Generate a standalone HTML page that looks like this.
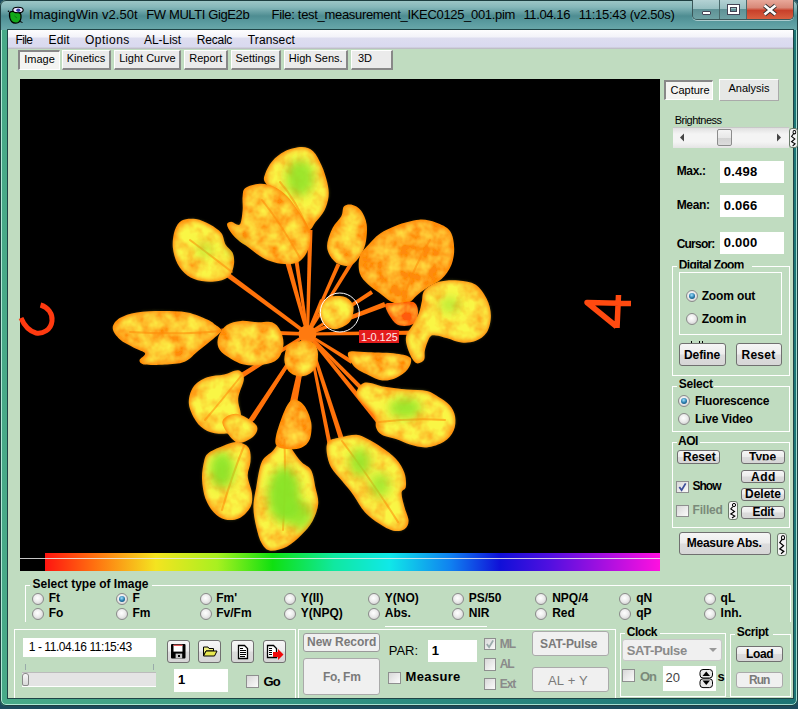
<!DOCTYPE html><html><head><meta charset="utf-8"><style>
*{margin:0;padding:0;box-sizing:border-box}
html,body{width:798px;height:709px;overflow:hidden;background:#2a6a70}
body{position:relative;font-family:"Liberation Sans",sans-serif;font-size:11px;color:#000}
.a{position:absolute}
.t{position:absolute;white-space:nowrap;line-height:1}
.btn{position:absolute;background:linear-gradient(180deg,#f6f6f6 0,#ececec 48%,#dcdcdc 52%,#d6d6d6 100%);border:1px solid #707070;border-radius:3px}
.tab{position:absolute;background:#ebebeb;border-top:1px solid #fff;border-left:1px solid #fff;border-right:2px solid #888;border-bottom:2px solid #888}
.tabd{position:absolute;background:#f4f4f2;border-top:2px solid #888;border-left:2px solid #888;border-right:1px solid #fff;border-bottom:1px solid #fff}
.grp{position:absolute;border:1px solid #fff}
.edit{position:absolute;background:#fff}
.radio{position:absolute;width:12px;height:12px;border-radius:50%;border:1px solid #8a8a8a;background:radial-gradient(circle at 45% 40%,#fff 0,#ececec 45%,#c4c4c4 100%)}
.radio.on::after{content:"";position:absolute;left:2px;top:2px;width:6px;height:6px;border-radius:50%;background:radial-gradient(circle at 45% 35%,#9ee0ff 0,#2478a8 55%,#0a3a60 100%)}
.chk{position:absolute;border:1px solid #8e8f8f;background:linear-gradient(135deg,#d8d8d8,#fbfbfb)}
</style></head><body><div class="a" style="left:0px;top:0px;width:798px;height:709px;background:#1c4a5c"></div>
<div class="a" style="left:0px;top:0px;width:798px;height:706px;background:linear-gradient(90deg,#48aa88 0%,#3e9e84 25%,#2c8c80 50%,#227c7a 80%,#1c7474 100%);border-radius:6px 6px 6px 6px"></div>
<div class="a" style="left:1px;top:1px;width:796px;height:704px;border:1px solid rgba(210,255,240,.75);border-radius:5px"></div>
<div class="a" style="left:0px;top:0px;width:798px;height:30px;background:linear-gradient(180deg,#a0c8c8 0,#86b8ba 7px,#4e8d92 16px,#5b9ca0 23px,#6aa8aa 30px);border-radius:6px 6px 0 0"></div>
<div class="a" style="left:0px;top:0px;width:798px;height:706px;border:1px solid #1e3e40;border-radius:6px"></div>
<div class="a" style="left:7px;top:29px;width:787px;height:670px;background:#c0dcc0;border:1px solid #1f4446"></div>
<div class="a" style="left:8px;top:30px;width:785px;height:19px;background:linear-gradient(180deg,#fdfdfe 0,#f3f3f9 7px,#dedef0 8px,#d9d9ef 17px,#c4c4cc 18px,#b8b8c0 19px)"></div>
<div class="t" style="left:15.50px;top:34.24px;font-size:12px;letter-spacing:-0.667px;">File</div>
<div class="t" style="left:48.60px;top:34.24px;font-size:12px;letter-spacing:0.133px;">Edit</div>
<div class="t" style="left:85.00px;top:34.24px;font-size:12px;letter-spacing:0.500px;">Options</div>
<div class="t" style="left:144.00px;top:34.24px;font-size:12px;letter-spacing:-0.050px;">AL-List</div>
<div class="t" style="left:196.70px;top:34.24px;font-size:12px;letter-spacing:-0.200px;">Recalc</div>
<div class="t" style="left:247.80px;top:34.24px;font-size:12px;letter-spacing:0.114px;">Transect</div>
<div class="t" style="left:29.00px;top:8.00px;font-size:13px;letter-spacing:0.062px;">ImagingWin v2.50t</div>
<div class="t" style="left:146.30px;top:8.00px;font-size:13px;letter-spacing:-0.393px;">FW MULTI GigE2b</div>
<div class="t" style="left:271.60px;top:8.00px;font-size:13px;letter-spacing:-0.316px;">File: test_measurement_IKEC0125_001.pim</div>
<div class="t" style="left:523.40px;top:8.00px;font-size:13px;letter-spacing:-0.371px;">11.04.16</div>
<div class="t" style="left:578.70px;top:8.00px;font-size:13px;letter-spacing:-0.250px;">11:15:43 (v2.50s)</div>
<div class="tabd" style="left:18px;top:50px;width:42px;height:20px;"></div>
<div class="t" style="left:24.25px;top:54.19px;font-size:11px;">Image</div>
<div class="tab" style="left:62px;top:50px;width:49px;height:20px;"></div>
<div class="t" style="left:66.75px;top:53.19px;font-size:11px;">Kinetics</div>
<div class="tab" style="left:114px;top:50px;width:67px;height:20px;"></div>
<div class="t" style="left:119.25px;top:53.19px;font-size:11px;">Light Curve</div>
<div class="tab" style="left:184px;top:50px;width:44px;height:20px;"></div>
<div class="t" style="left:189.25px;top:53.19px;font-size:11px;">Report</div>
<div class="tab" style="left:231px;top:50px;width:50px;height:20px;"></div>
<div class="t" style="left:235.50px;top:53.19px;font-size:11px;">Settings</div>
<div class="tab" style="left:284px;top:50px;width:64px;height:20px;"></div>
<div class="t" style="left:288.75px;top:53.19px;font-size:11px;">High Sens.</div>
<div class="tab" style="left:351px;top:50px;width:42px;height:20px;"></div>
<div class="t" style="left:358.00px;top:53.19px;font-size:11px;">3D</div>
<div class="a" style="left:20px;top:79px;width:640px;height:492px;background:#000"></div>
<div class="a" style="left:45px;top:553px;width:615px;height:18px;background:linear-gradient(90deg,#ff1410 0%,#ff7010 8%,#f4e420 18%,#a8f020 28%,#10e010 37%,#10e8a0 47%,#10e8e8 56%,#1080f0 66%,#1010d8 74%,#5010e0 82%,#ff10e0 100%)"></div>
<div class="a" style="left:20px;top:558px;width:640px;height:1px;background:#e8e8e8;opacity:.85"></div>
<svg class="a" style="left:0;top:0" width="798" height="709" viewBox="0 0 798 709">
<defs>
<filter id="fy" x="-10%" y="-10%" width="120%" height="120%">
 <feMorphology in="SourceAlpha" operator="erode" radius="2" result="e"/>
 <feGaussianBlur in="e" stdDeviation="2.2" result="b"/>
 <feTurbulence type="fractalNoise" baseFrequency="0.07" numOctaves="3" seed="4" result="n"/>
 <feColorMatrix in="n" type="matrix" values="0 0 0 0 0.95  0 0 0 0 0.92  0 0 0 0 0.06  0 0 0 -1.6 1.6" result="y"/>
 <feComposite in="y" in2="b" operator="in" result="yi"/>
 <feMerge><feMergeNode in="SourceGraphic"/><feMergeNode in="yi"/></feMerge>
</filter>
<filter id="fyo" x="-10%" y="-10%" width="120%" height="120%">
 <feMorphology in="SourceAlpha" operator="erode" radius="2" result="e"/>
 <feGaussianBlur in="e" stdDeviation="2.2" result="b"/>
 <feTurbulence type="fractalNoise" baseFrequency="0.07" numOctaves="3" seed="5" result="n"/>
 <feColorMatrix in="n" type="matrix" values="0 0 0 0 0.97  0 0 0 0 0.88  0 0 0 0 0.06  0 0 0 -1.6 1.3" result="y"/>
 <feComposite in="y" in2="b" operator="in" result="yi"/>
 <feMerge><feMergeNode in="SourceGraphic"/><feMergeNode in="yi"/></feMerge>
</filter>
<filter id="fo" x="-10%" y="-10%" width="120%" height="120%">
 <feMorphology in="SourceAlpha" operator="erode" radius="2" result="e"/>
 <feGaussianBlur in="e" stdDeviation="2.2" result="b"/>
 <feTurbulence type="fractalNoise" baseFrequency="0.07" numOctaves="3" seed="7" result="n"/>
 <feColorMatrix in="n" type="matrix" values="0 0 0 0 1.0  0 0 0 0 0.8  0 0 0 0 0.06  0 0 0 -1.6 1.1" result="y"/>
 <feComposite in="y" in2="b" operator="in" result="yi"/>
 <feMerge><feMergeNode in="SourceGraphic"/><feMergeNode in="yi"/></feMerge>
</filter>
<filter id="gb"><feGaussianBlur stdDeviation="5"/></filter>
<clipPath id="cp">
<path d="M265.1 173.9 C266.3 170.4 268.9 165.0 272.2 161.2 C275.5 157.4 280.0 153.7 284.9 151.3 C289.8 149.0 297.1 147.1 301.8 147.1 C306.5 147.1 309.8 148.2 313.1 151.3 C316.4 154.4 319.2 160.2 321.6 165.4 C324.0 170.6 326.0 177.1 327.2 182.3 C328.4 187.5 329.1 191.7 328.6 196.4 C328.1 201.1 326.5 206.3 324.4 210.5 C322.3 214.7 318.7 218.5 315.9 221.8 C313.1 225.1 311.2 232.2 307.4 230.3 C303.6 228.4 298.5 216.6 293.3 210.5 C288.1 204.4 281.1 198.3 276.4 193.6 C271.7 188.9 267.0 185.6 265.1 182.3 C263.2 179.0 263.9 177.4 265.1 173.9Z"/>
<path d="M245.4 188.0 C248.2 185.9 254.8 183.9 259.5 183.7 C264.2 183.4 269.0 184.4 273.6 186.5 C278.2 188.6 282.8 191.8 287.0 196.0 C291.2 200.2 295.3 206.5 299.0 212.0 C302.7 217.5 307.3 223.2 309.0 229.0 C310.7 234.8 310.5 241.7 309.0 247.0 C307.5 252.3 304.0 258.1 300.0 261.0 C296.0 263.9 289.8 264.1 284.9 264.1 C280.0 264.2 275.0 262.7 270.8 261.3 C266.6 259.9 263.3 258.1 259.5 255.7 C255.7 253.3 251.5 249.5 248.2 247.2 C244.9 244.8 242.5 243.9 239.7 241.6 C236.9 239.2 233.4 235.9 231.3 233.1 C229.2 230.3 227.0 226.5 227.0 224.6 C227.0 222.7 229.2 221.8 231.3 221.8 C233.4 221.8 237.8 226.5 239.7 224.6 C241.6 222.7 242.1 215.2 242.6 210.5 C243.1 205.8 242.1 200.2 242.6 196.4 C243.1 192.7 242.6 190.1 245.4 188.0Z"/>
<path d="M181.8 220.4 C185.3 218.5 191.2 218.3 195.9 219.0 C200.6 219.7 205.8 222.2 210.0 224.6 C214.2 226.9 218.7 229.8 221.3 233.1 C223.9 236.4 223.6 241.1 225.5 244.4 C227.4 247.7 231.2 249.5 232.6 252.8 C234.0 256.1 234.5 260.3 234.0 264.1 C233.5 267.9 232.4 272.6 229.8 275.4 C227.2 278.2 223.2 280.1 218.5 281.0 C213.8 281.9 206.8 281.9 201.6 281.0 C196.4 280.1 191.4 278.2 187.4 275.4 C183.4 272.6 180.0 268.8 177.6 264.1 C175.2 259.4 173.3 252.8 172.8 247.2 C172.3 241.6 173.3 234.8 174.8 230.3 C176.3 225.8 178.3 222.3 181.8 220.4Z"/>
<path d="M112.7 328.0 C112.7 324.5 115.7 320.7 119.7 318.1 C123.7 315.5 129.6 313.6 136.7 312.4 C143.8 311.2 153.6 311.0 162.1 311.0 C170.6 311.0 179.9 311.0 187.4 312.4 C194.9 313.8 202.5 317.4 207.2 319.5 C211.9 321.6 213.3 323.2 215.7 325.1 C218.0 327.0 221.8 328.5 221.3 330.8 C220.8 333.1 216.6 335.9 212.8 339.2 C209.0 342.5 203.4 346.7 198.7 350.5 C194.0 354.3 190.2 359.4 184.6 361.8 C179.0 364.2 171.5 364.1 164.9 364.6 C158.3 365.1 149.3 365.3 145.1 364.6 C140.9 363.9 139.5 362.3 139.5 360.4 C139.5 358.5 146.0 355.4 145.1 353.3 C144.2 351.2 138.1 350.1 133.9 347.7 C129.7 345.3 123.2 342.5 119.7 339.2 C116.2 335.9 112.7 331.5 112.7 328.0Z"/>
<path d="M218.5 336.4 C219.9 332.6 223.2 327.7 226.9 325.1 C230.7 322.5 235.8 321.4 241.0 320.9 C246.2 320.4 252.8 322.1 258.0 322.3 C263.2 322.5 268.4 320.9 272.1 322.3 C275.9 323.7 278.6 327.0 280.5 330.8 C282.4 334.6 283.9 340.2 283.4 344.9 C282.9 349.6 281.0 355.7 277.7 359.0 C274.4 362.3 269.2 363.7 263.6 364.6 C258.0 365.5 250.0 366.0 243.9 364.6 C237.8 363.2 231.1 359.0 226.9 356.2 C222.7 353.4 219.9 351.0 218.5 347.7 C217.1 344.4 217.1 340.2 218.5 336.4Z"/>
<path d="M193.1 387.2 C196.1 382.7 202.0 379.4 207.2 377.3 C212.4 375.2 218.9 375.7 224.1 374.5 C229.3 373.3 234.9 369.6 238.2 370.3 C241.5 371.0 243.9 374.0 243.9 378.7 C243.9 383.4 238.7 392.4 238.2 398.5 C237.7 404.6 241.0 410.2 241.0 415.4 C241.0 420.6 241.0 426.4 238.2 429.5 C235.4 432.6 229.3 433.5 224.1 433.7 C218.9 433.9 211.9 433.0 207.2 430.9 C202.5 428.8 198.9 425.5 195.9 421.0 C192.9 416.5 189.4 409.7 188.9 404.1 C188.4 398.5 190.1 391.7 193.1 387.2Z"/>
<path d="M222.3 422.3 C222.3 417.6 230.8 413.3 236.4 413.8 C242.1 414.3 253.4 421.3 256.2 425.1 C259.0 428.9 256.7 433.6 253.4 436.4 C250.1 439.2 241.6 444.5 236.4 442.1 C231.2 439.8 222.3 427.0 222.3 422.3Z"/>
<path d="M208.2 453.3 C211.2 450.7 217.6 448.2 222.3 446.3 C227.0 444.4 232.0 441.9 236.4 442.1 C240.8 442.3 246.3 444.4 248.7 447.7 C251.0 451.0 250.7 457.1 250.5 461.8 C250.3 466.5 247.5 470.7 247.7 475.9 C247.9 481.1 251.4 487.6 251.9 492.8 C252.4 498.0 252.6 502.7 250.5 506.9 C248.4 511.1 243.4 516.1 239.2 518.2 C235.0 520.3 229.3 520.5 225.1 519.6 C220.9 518.7 217.2 516.1 213.9 512.6 C210.6 509.1 207.4 504.1 205.4 498.5 C203.4 492.9 202.2 484.8 202.0 478.7 C201.8 472.6 203.0 466.0 204.0 461.8 C205.0 457.6 205.1 455.9 208.2 453.3Z"/>
<path d="M261.8 461.8 C264.6 455.7 269.3 454.7 273.1 450.5 C276.9 446.3 281.1 436.4 284.4 436.4 C287.7 436.4 290.0 446.3 292.8 450.5 C295.6 454.7 298.2 458.5 301.3 461.8 C304.4 465.1 308.9 466.1 311.2 470.3 C313.5 474.5 314.2 481.6 315.4 487.2 C316.6 492.8 318.7 498.5 318.2 504.1 C317.7 509.7 315.4 515.8 312.6 521.0 C309.8 526.2 305.5 530.9 301.3 535.1 C297.1 539.3 292.4 543.8 287.2 546.4 C282.0 549.0 274.5 551.2 270.3 550.7 C266.1 550.2 264.2 547.6 261.8 543.6 C259.4 539.6 257.6 532.8 256.2 526.7 C254.8 520.6 253.4 513.5 253.4 506.9 C253.4 500.3 254.8 494.7 256.2 487.2 C257.6 479.7 259.0 467.9 261.8 461.8Z"/>
<path d="M275.9 436.4 C277.1 430.5 281.6 417.1 284.4 411.0 C287.2 404.9 289.5 400.6 292.8 399.7 C296.1 398.8 301.0 401.6 304.1 405.4 C307.2 409.2 310.2 416.7 311.2 422.3 C312.1 427.9 311.4 435.0 309.8 439.2 C308.2 443.4 305.1 446.0 301.3 447.7 C297.5 449.4 291.2 449.3 287.2 449.1 C283.2 448.9 279.2 448.4 277.3 446.3 C275.4 444.2 274.7 442.3 275.9 436.4Z"/>
<path d="M327.2 244.4 C327.7 239.7 330.4 232.1 332.8 227.4 C335.2 222.7 339.4 219.7 341.3 216.2 C343.2 212.7 342.2 208.2 344.1 206.3 C346.0 204.4 349.8 204.2 352.6 204.9 C355.4 205.6 358.6 207.2 361.0 210.5 C363.4 213.8 366.0 218.9 366.7 224.6 C367.4 230.2 366.7 238.8 365.3 244.4 C363.9 250.1 360.8 255.0 358.2 258.5 C355.6 262.0 353.1 264.6 349.8 265.5 C346.5 266.4 341.8 265.7 338.5 264.1 C335.2 262.5 331.9 259.0 330.0 255.7 C328.1 252.4 326.7 249.1 327.2 244.4Z"/>
<path d="M321.1 303.7 C322.8 301.2 325.6 298.0 329.5 296.9 C333.4 295.8 340.9 295.5 344.8 296.9 C348.8 298.3 352.1 301.7 353.2 305.4 C354.3 309.1 352.9 315.5 351.5 318.9 C350.1 322.3 347.9 324.0 344.8 325.7 C341.7 327.4 336.6 329.7 332.9 329.1 C329.2 328.5 325.1 325.1 322.8 322.3 C320.6 319.5 319.7 315.2 319.4 312.1 C319.1 309.0 319.4 306.2 321.1 303.7Z"/>
<path d="M288.9 344.3 C291.4 342.6 296.9 341.2 300.8 340.9 C304.8 340.6 309.8 340.9 312.6 342.6 C315.4 344.3 317.0 347.4 317.7 351.1 C318.4 354.8 317.9 360.9 316.8 364.6 C315.7 368.3 313.6 371.1 310.9 373.1 C308.2 375.1 304.2 376.4 300.8 376.4 C297.4 376.4 293.3 375.4 290.6 373.1 C287.9 370.9 285.6 366.6 284.7 362.9 C283.8 359.2 284.8 354.2 285.5 351.1 C286.2 348.0 286.3 346.0 288.9 344.3Z"/>
<path d="M368.2 245.1 C371.5 241.3 374.8 237.2 379.5 233.9 C384.2 230.6 389.8 227.8 396.4 225.4 C403.0 223.0 412.4 220.2 419.0 219.7 C425.6 219.2 430.7 220.7 435.9 222.6 C441.1 224.5 446.9 226.8 450.0 231.0 C453.1 235.2 454.0 242.3 454.2 248.0 C454.4 253.7 453.5 259.7 451.4 264.9 C449.3 270.1 445.6 275.2 441.6 279.0 C437.6 282.8 431.6 284.7 427.4 287.5 C423.2 290.3 419.0 293.5 416.2 295.9 C413.4 298.2 412.9 300.2 410.5 301.6 C408.1 303.0 405.3 304.4 402.0 304.4 C398.7 304.4 394.6 303.5 390.8 301.6 C387.1 299.7 383.3 295.9 379.5 293.1 C375.7 290.3 371.5 287.9 368.2 284.6 C364.9 281.3 361.1 278.0 359.7 273.3 C358.3 268.6 358.3 261.1 359.7 256.4 C361.1 251.7 364.9 248.8 368.2 245.1Z"/>
<path d="M385.0 305.0 C385.0 301.5 391.7 303.5 396.4 303.0 C401.1 302.5 409.7 300.5 413.3 302.0 C416.9 303.5 418.0 308.3 418.0 312.0 C418.0 315.7 416.9 322.1 413.3 324.1 C409.7 326.1 401.1 327.3 396.4 324.1 C391.7 320.9 385.0 308.5 385.0 305.0Z"/>
<path d="M424.6 290.3 C427.4 287.0 433.1 283.5 438.7 281.8 C444.3 280.1 452.4 279.9 458.5 280.4 C464.6 280.9 470.7 281.6 475.4 284.6 C480.1 287.7 484.1 293.5 486.7 298.7 C489.3 303.9 490.9 310.0 490.9 315.7 C490.9 321.4 489.3 328.4 486.7 332.6 C484.1 336.8 479.6 339.4 475.4 341.0 C471.2 342.6 466.0 343.0 461.3 342.5 C456.6 342.0 451.4 339.4 447.2 338.2 C443.0 337.0 438.8 335.6 435.9 335.4 C433.0 335.2 431.8 334.6 430.0 337.0 C428.2 339.4 426.0 346.2 425.0 350.0 C424.0 353.8 425.5 357.8 424.0 360.0 C422.5 362.2 418.5 364.3 416.0 363.0 C413.5 361.7 410.7 356.3 409.0 352.0 C407.3 347.7 405.3 341.6 406.0 337.0 C406.7 332.4 411.1 328.1 413.3 324.1 C415.5 320.1 417.6 316.6 419.0 312.8 C420.4 309.1 420.9 305.4 421.8 301.6 C422.7 297.9 421.8 293.6 424.6 290.3Z"/>
<path d="M348.5 352.3 C350.9 350.0 360.2 352.1 368.2 352.3 C376.2 352.5 389.3 352.8 396.4 353.7 C403.4 354.6 408.6 355.4 410.5 358.0 C412.4 360.6 410.1 366.0 407.7 369.3 C405.3 372.6 400.6 375.8 396.4 377.7 C392.2 379.6 387.0 381.0 382.3 380.5 C377.6 380.0 372.9 377.2 368.2 374.9 C363.5 372.5 357.4 370.2 354.1 366.4 C350.8 362.6 346.1 354.6 348.5 352.3Z"/>
<path d="M364.9 382.6 C369.6 381.4 377.6 385.6 384.6 386.8 C391.7 388.0 400.1 388.9 407.2 389.6 C414.2 390.3 421.7 389.8 426.9 391.0 C432.1 392.2 434.4 394.3 438.2 396.7 C442.0 399.1 446.7 401.8 449.5 405.1 C452.3 408.4 454.4 412.2 455.1 416.4 C455.8 420.6 455.6 426.3 453.7 430.5 C451.8 434.7 448.4 439.0 443.9 441.8 C439.4 444.6 432.5 446.9 426.9 447.4 C421.2 447.9 415.2 446.0 410.0 444.6 C404.8 443.2 400.6 440.6 395.9 439.0 C391.2 437.4 385.1 436.7 381.8 434.8 C378.5 432.9 377.4 430.8 376.2 427.7 C375.0 424.6 376.7 420.2 374.8 416.4 C372.9 412.6 368.0 408.9 364.9 405.1 C361.8 401.4 356.4 397.6 356.4 393.9 C356.4 390.1 360.2 383.8 364.9 382.6Z"/>
<path d="M328.2 441.8 C330.3 439.2 334.8 438.8 339.5 437.6 C344.2 436.4 351.7 434.6 356.4 434.8 C361.1 435.0 363.5 436.9 367.7 439.0 C371.9 441.1 377.1 444.1 381.8 447.4 C386.5 450.7 392.1 454.5 395.9 458.7 C399.7 462.9 402.8 468.1 404.4 472.8 C406.0 477.5 406.3 483.6 405.8 486.9 C405.3 490.2 401.8 489.3 401.6 492.6 C401.4 495.9 403.2 502.0 404.4 506.7 C405.6 511.4 408.6 517.0 408.6 520.8 C408.6 524.5 407.0 527.6 404.4 529.2 C401.8 530.9 397.3 531.6 393.1 530.7 C388.9 529.8 383.7 526.7 379.0 523.6 C374.3 520.5 369.1 517.0 364.9 512.3 C360.7 507.6 357.4 500.6 353.6 495.4 C349.8 490.2 346.1 486.0 342.3 481.3 C338.5 476.6 333.6 471.9 331.0 467.2 C328.4 462.5 327.3 457.3 326.8 453.1 C326.3 448.9 326.1 444.4 328.2 441.8Z"/>
</clipPath></defs>
<g>
<path d="M308.5 332.6 L230.0 273.4 L227.0 277.4 L306.5 335.4Z" fill="#ff720a"/>
<path d="M308.9 333.6 L290.1 261.3 L285.3 262.7 L306.1 334.4Z" fill="#ff720a"/>
<path d="M308.7 333.8 L298.0 257.7 L294.0 258.3 L306.3 334.2Z" fill="#ff720a"/>
<path d="M309.0 334.0 L312.5 230.1 L308.1 229.9 L306.0 334.0Z" fill="#ff720a"/>
<path d="M308.6 334.5 L340.3 264.9 L336.7 263.3 L306.4 333.5Z" fill="#ff720a"/>
<path d="M308.6 334.7 L353.7 263.1 L350.3 260.9 L306.4 333.3Z" fill="#ff720a"/>
<path d="M308.2 335.0 L373.1 293.7 L370.9 290.3 L306.8 333.0Z" fill="#ff720a"/>
<path d="M308.0 335.4 L385.9 306.7 L384.1 302.1 L307.0 332.6Z" fill="#ff720a"/>
<path d="M307.5 335.5 L416.2 334.8 L416.2 330.4 L307.5 332.5Z" fill="#ff720a"/>
<path d="M307.6 332.3 L221.4 328.5 L221.2 333.5 L307.4 335.7Z" fill="#ff720a"/>
<path d="M306.7 332.7 L239.7 373.8 L242.3 378.0 L308.3 335.3Z" fill="#ff720a"/>
<path d="M306.2 333.2 L234.3 440.7 L238.5 443.5 L308.8 334.8Z" fill="#ff720a"/>
<path d="M306.4 333.3 L250.3 418.9 L253.7 421.1 L308.6 334.7Z" fill="#ff720a"/>
<path d="M306.0 333.7 L282.0 435.8 L286.8 437.0 L309.0 334.3Z" fill="#ff720a"/>
<path d="M306.0 333.7 L292.8 401.6 L297.2 402.4 L309.0 334.3Z" fill="#ff720a"/>
<path d="M306.1 334.5 L339.9 442.6 L344.7 441.0 L308.9 333.5Z" fill="#ff720a"/>
<path d="M306.3 334.2 L328.0 446.4 L332.0 445.6 L308.7 333.8Z" fill="#ff720a"/>
<path d="M306.3 334.9 L377.1 423.7 L380.9 420.5 L308.7 333.1Z" fill="#ff720a"/>
<path d="M306.6 334.9 L366.4 396.6 L369.6 393.4 L308.4 333.1Z" fill="#ff720a"/>
<path d="M306.8 335.1 L350.9 363.7 L353.1 360.3 L308.2 332.9Z" fill="#ff720a"/>
<path d="M308.9 334.6 L323.8 300.8 L320.2 299.2 L306.1 333.4Z" fill="#ff720a"/>
<circle cx="307.5" cy="334" r="9" fill="#ff7a10"/>
<path d="M265.1 173.9 C266.3 170.4 268.9 165.0 272.2 161.2 C275.5 157.4 280.0 153.7 284.9 151.3 C289.8 149.0 297.1 147.1 301.8 147.1 C306.5 147.1 309.8 148.2 313.1 151.3 C316.4 154.4 319.2 160.2 321.6 165.4 C324.0 170.6 326.0 177.1 327.2 182.3 C328.4 187.5 329.1 191.7 328.6 196.4 C328.1 201.1 326.5 206.3 324.4 210.5 C322.3 214.7 318.7 218.5 315.9 221.8 C313.1 225.1 311.2 232.2 307.4 230.3 C303.6 228.4 298.5 216.6 293.3 210.5 C288.1 204.4 281.1 198.3 276.4 193.6 C271.7 188.9 267.0 185.6 265.1 182.3 C263.2 179.0 263.9 177.4 265.1 173.9Z" fill="#ff8a0a" filter="url(#fy)"/>
<path d="M245.4 188.0 C248.2 185.9 254.8 183.9 259.5 183.7 C264.2 183.4 269.0 184.4 273.6 186.5 C278.2 188.6 282.8 191.8 287.0 196.0 C291.2 200.2 295.3 206.5 299.0 212.0 C302.7 217.5 307.3 223.2 309.0 229.0 C310.7 234.8 310.5 241.7 309.0 247.0 C307.5 252.3 304.0 258.1 300.0 261.0 C296.0 263.9 289.8 264.1 284.9 264.1 C280.0 264.2 275.0 262.7 270.8 261.3 C266.6 259.9 263.3 258.1 259.5 255.7 C255.7 253.3 251.5 249.5 248.2 247.2 C244.9 244.8 242.5 243.9 239.7 241.6 C236.9 239.2 233.4 235.9 231.3 233.1 C229.2 230.3 227.0 226.5 227.0 224.6 C227.0 222.7 229.2 221.8 231.3 221.8 C233.4 221.8 237.8 226.5 239.7 224.6 C241.6 222.7 242.1 215.2 242.6 210.5 C243.1 205.8 242.1 200.2 242.6 196.4 C243.1 192.7 242.6 190.1 245.4 188.0Z" fill="#ff8a0a" filter="url(#fyo)"/>
<path d="M181.8 220.4 C185.3 218.5 191.2 218.3 195.9 219.0 C200.6 219.7 205.8 222.2 210.0 224.6 C214.2 226.9 218.7 229.8 221.3 233.1 C223.9 236.4 223.6 241.1 225.5 244.4 C227.4 247.7 231.2 249.5 232.6 252.8 C234.0 256.1 234.5 260.3 234.0 264.1 C233.5 267.9 232.4 272.6 229.8 275.4 C227.2 278.2 223.2 280.1 218.5 281.0 C213.8 281.9 206.8 281.9 201.6 281.0 C196.4 280.1 191.4 278.2 187.4 275.4 C183.4 272.6 180.0 268.8 177.6 264.1 C175.2 259.4 173.3 252.8 172.8 247.2 C172.3 241.6 173.3 234.8 174.8 230.3 C176.3 225.8 178.3 222.3 181.8 220.4Z" fill="#ff8a0a" filter="url(#fy)"/>
<path d="M112.7 328.0 C112.7 324.5 115.7 320.7 119.7 318.1 C123.7 315.5 129.6 313.6 136.7 312.4 C143.8 311.2 153.6 311.0 162.1 311.0 C170.6 311.0 179.9 311.0 187.4 312.4 C194.9 313.8 202.5 317.4 207.2 319.5 C211.9 321.6 213.3 323.2 215.7 325.1 C218.0 327.0 221.8 328.5 221.3 330.8 C220.8 333.1 216.6 335.9 212.8 339.2 C209.0 342.5 203.4 346.7 198.7 350.5 C194.0 354.3 190.2 359.4 184.6 361.8 C179.0 364.2 171.5 364.1 164.9 364.6 C158.3 365.1 149.3 365.3 145.1 364.6 C140.9 363.9 139.5 362.3 139.5 360.4 C139.5 358.5 146.0 355.4 145.1 353.3 C144.2 351.2 138.1 350.1 133.9 347.7 C129.7 345.3 123.2 342.5 119.7 339.2 C116.2 335.9 112.7 331.5 112.7 328.0Z" fill="#ff8a0a" filter="url(#fyo)"/>
<path d="M218.5 336.4 C219.9 332.6 223.2 327.7 226.9 325.1 C230.7 322.5 235.8 321.4 241.0 320.9 C246.2 320.4 252.8 322.1 258.0 322.3 C263.2 322.5 268.4 320.9 272.1 322.3 C275.9 323.7 278.6 327.0 280.5 330.8 C282.4 334.6 283.9 340.2 283.4 344.9 C282.9 349.6 281.0 355.7 277.7 359.0 C274.4 362.3 269.2 363.7 263.6 364.6 C258.0 365.5 250.0 366.0 243.9 364.6 C237.8 363.2 231.1 359.0 226.9 356.2 C222.7 353.4 219.9 351.0 218.5 347.7 C217.1 344.4 217.1 340.2 218.5 336.4Z" fill="#ff8a0a" filter="url(#fyo)"/>
<path d="M193.1 387.2 C196.1 382.7 202.0 379.4 207.2 377.3 C212.4 375.2 218.9 375.7 224.1 374.5 C229.3 373.3 234.9 369.6 238.2 370.3 C241.5 371.0 243.9 374.0 243.9 378.7 C243.9 383.4 238.7 392.4 238.2 398.5 C237.7 404.6 241.0 410.2 241.0 415.4 C241.0 420.6 241.0 426.4 238.2 429.5 C235.4 432.6 229.3 433.5 224.1 433.7 C218.9 433.9 211.9 433.0 207.2 430.9 C202.5 428.8 198.9 425.5 195.9 421.0 C192.9 416.5 189.4 409.7 188.9 404.1 C188.4 398.5 190.1 391.7 193.1 387.2Z" fill="#ff8a0a" filter="url(#fy)"/>
<path d="M222.3 422.3 C222.3 417.6 230.8 413.3 236.4 413.8 C242.1 414.3 253.4 421.3 256.2 425.1 C259.0 428.9 256.7 433.6 253.4 436.4 C250.1 439.2 241.6 444.5 236.4 442.1 C231.2 439.8 222.3 427.0 222.3 422.3Z" fill="#ff8a0a" filter="url(#fy)"/>
<path d="M208.2 453.3 C211.2 450.7 217.6 448.2 222.3 446.3 C227.0 444.4 232.0 441.9 236.4 442.1 C240.8 442.3 246.3 444.4 248.7 447.7 C251.0 451.0 250.7 457.1 250.5 461.8 C250.3 466.5 247.5 470.7 247.7 475.9 C247.9 481.1 251.4 487.6 251.9 492.8 C252.4 498.0 252.6 502.7 250.5 506.9 C248.4 511.1 243.4 516.1 239.2 518.2 C235.0 520.3 229.3 520.5 225.1 519.6 C220.9 518.7 217.2 516.1 213.9 512.6 C210.6 509.1 207.4 504.1 205.4 498.5 C203.4 492.9 202.2 484.8 202.0 478.7 C201.8 472.6 203.0 466.0 204.0 461.8 C205.0 457.6 205.1 455.9 208.2 453.3Z" fill="#ff8a0a" filter="url(#fy)"/>
<path d="M261.8 461.8 C264.6 455.7 269.3 454.7 273.1 450.5 C276.9 446.3 281.1 436.4 284.4 436.4 C287.7 436.4 290.0 446.3 292.8 450.5 C295.6 454.7 298.2 458.5 301.3 461.8 C304.4 465.1 308.9 466.1 311.2 470.3 C313.5 474.5 314.2 481.6 315.4 487.2 C316.6 492.8 318.7 498.5 318.2 504.1 C317.7 509.7 315.4 515.8 312.6 521.0 C309.8 526.2 305.5 530.9 301.3 535.1 C297.1 539.3 292.4 543.8 287.2 546.4 C282.0 549.0 274.5 551.2 270.3 550.7 C266.1 550.2 264.2 547.6 261.8 543.6 C259.4 539.6 257.6 532.8 256.2 526.7 C254.8 520.6 253.4 513.5 253.4 506.9 C253.4 500.3 254.8 494.7 256.2 487.2 C257.6 479.7 259.0 467.9 261.8 461.8Z" fill="#ff8a0a" filter="url(#fy)"/>
<path d="M275.9 436.4 C277.1 430.5 281.6 417.1 284.4 411.0 C287.2 404.9 289.5 400.6 292.8 399.7 C296.1 398.8 301.0 401.6 304.1 405.4 C307.2 409.2 310.2 416.7 311.2 422.3 C312.1 427.9 311.4 435.0 309.8 439.2 C308.2 443.4 305.1 446.0 301.3 447.7 C297.5 449.4 291.2 449.3 287.2 449.1 C283.2 448.9 279.2 448.4 277.3 446.3 C275.4 444.2 274.7 442.3 275.9 436.4Z" fill="#ff8a0a" filter="url(#fo)"/>
<path d="M327.2 244.4 C327.7 239.7 330.4 232.1 332.8 227.4 C335.2 222.7 339.4 219.7 341.3 216.2 C343.2 212.7 342.2 208.2 344.1 206.3 C346.0 204.4 349.8 204.2 352.6 204.9 C355.4 205.6 358.6 207.2 361.0 210.5 C363.4 213.8 366.0 218.9 366.7 224.6 C367.4 230.2 366.7 238.8 365.3 244.4 C363.9 250.1 360.8 255.0 358.2 258.5 C355.6 262.0 353.1 264.6 349.8 265.5 C346.5 266.4 341.8 265.7 338.5 264.1 C335.2 262.5 331.9 259.0 330.0 255.7 C328.1 252.4 326.7 249.1 327.2 244.4Z" fill="#ff8a0a" filter="url(#fyo)"/>
<path d="M321.1 303.7 C322.8 301.2 325.6 298.0 329.5 296.9 C333.4 295.8 340.9 295.5 344.8 296.9 C348.8 298.3 352.1 301.7 353.2 305.4 C354.3 309.1 352.9 315.5 351.5 318.9 C350.1 322.3 347.9 324.0 344.8 325.7 C341.7 327.4 336.6 329.7 332.9 329.1 C329.2 328.5 325.1 325.1 322.8 322.3 C320.6 319.5 319.7 315.2 319.4 312.1 C319.1 309.0 319.4 306.2 321.1 303.7Z" fill="#ff8a0a" filter="url(#fy)"/>
<path d="M288.9 344.3 C291.4 342.6 296.9 341.2 300.8 340.9 C304.8 340.6 309.8 340.9 312.6 342.6 C315.4 344.3 317.0 347.4 317.7 351.1 C318.4 354.8 317.9 360.9 316.8 364.6 C315.7 368.3 313.6 371.1 310.9 373.1 C308.2 375.1 304.2 376.4 300.8 376.4 C297.4 376.4 293.3 375.4 290.6 373.1 C287.9 370.9 285.6 366.6 284.7 362.9 C283.8 359.2 284.8 354.2 285.5 351.1 C286.2 348.0 286.3 346.0 288.9 344.3Z" fill="#ff8a0a" filter="url(#fyo)"/>
<path d="M368.2 245.1 C371.5 241.3 374.8 237.2 379.5 233.9 C384.2 230.6 389.8 227.8 396.4 225.4 C403.0 223.0 412.4 220.2 419.0 219.7 C425.6 219.2 430.7 220.7 435.9 222.6 C441.1 224.5 446.9 226.8 450.0 231.0 C453.1 235.2 454.0 242.3 454.2 248.0 C454.4 253.7 453.5 259.7 451.4 264.9 C449.3 270.1 445.6 275.2 441.6 279.0 C437.6 282.8 431.6 284.7 427.4 287.5 C423.2 290.3 419.0 293.5 416.2 295.9 C413.4 298.2 412.9 300.2 410.5 301.6 C408.1 303.0 405.3 304.4 402.0 304.4 C398.7 304.4 394.6 303.5 390.8 301.6 C387.1 299.7 383.3 295.9 379.5 293.1 C375.7 290.3 371.5 287.9 368.2 284.6 C364.9 281.3 361.1 278.0 359.7 273.3 C358.3 268.6 358.3 261.1 359.7 256.4 C361.1 251.7 364.9 248.8 368.2 245.1Z" fill="#ff8a0a" filter="url(#fo)"/>
<path d="M385.0 305.0 C385.0 301.5 391.7 303.5 396.4 303.0 C401.1 302.5 409.7 300.5 413.3 302.0 C416.9 303.5 418.0 308.3 418.0 312.0 C418.0 315.7 416.9 322.1 413.3 324.1 C409.7 326.1 401.1 327.3 396.4 324.1 C391.7 320.9 385.0 308.5 385.0 305.0Z" fill="#ff5a10" filter="url(#fo)"/>
<path d="M424.6 290.3 C427.4 287.0 433.1 283.5 438.7 281.8 C444.3 280.1 452.4 279.9 458.5 280.4 C464.6 280.9 470.7 281.6 475.4 284.6 C480.1 287.7 484.1 293.5 486.7 298.7 C489.3 303.9 490.9 310.0 490.9 315.7 C490.9 321.4 489.3 328.4 486.7 332.6 C484.1 336.8 479.6 339.4 475.4 341.0 C471.2 342.6 466.0 343.0 461.3 342.5 C456.6 342.0 451.4 339.4 447.2 338.2 C443.0 337.0 438.8 335.6 435.9 335.4 C433.0 335.2 431.8 334.6 430.0 337.0 C428.2 339.4 426.0 346.2 425.0 350.0 C424.0 353.8 425.5 357.8 424.0 360.0 C422.5 362.2 418.5 364.3 416.0 363.0 C413.5 361.7 410.7 356.3 409.0 352.0 C407.3 347.7 405.3 341.6 406.0 337.0 C406.7 332.4 411.1 328.1 413.3 324.1 C415.5 320.1 417.6 316.6 419.0 312.8 C420.4 309.1 420.9 305.4 421.8 301.6 C422.7 297.9 421.8 293.6 424.6 290.3Z" fill="#ff8a0a" filter="url(#fy)"/>
<path d="M348.5 352.3 C350.9 350.0 360.2 352.1 368.2 352.3 C376.2 352.5 389.3 352.8 396.4 353.7 C403.4 354.6 408.6 355.4 410.5 358.0 C412.4 360.6 410.1 366.0 407.7 369.3 C405.3 372.6 400.6 375.8 396.4 377.7 C392.2 379.6 387.0 381.0 382.3 380.5 C377.6 380.0 372.9 377.2 368.2 374.9 C363.5 372.5 357.4 370.2 354.1 366.4 C350.8 362.6 346.1 354.6 348.5 352.3Z" fill="#ff8a0a" filter="url(#fyo)"/>
<path d="M364.9 382.6 C369.6 381.4 377.6 385.6 384.6 386.8 C391.7 388.0 400.1 388.9 407.2 389.6 C414.2 390.3 421.7 389.8 426.9 391.0 C432.1 392.2 434.4 394.3 438.2 396.7 C442.0 399.1 446.7 401.8 449.5 405.1 C452.3 408.4 454.4 412.2 455.1 416.4 C455.8 420.6 455.6 426.3 453.7 430.5 C451.8 434.7 448.4 439.0 443.9 441.8 C439.4 444.6 432.5 446.9 426.9 447.4 C421.2 447.9 415.2 446.0 410.0 444.6 C404.8 443.2 400.6 440.6 395.9 439.0 C391.2 437.4 385.1 436.7 381.8 434.8 C378.5 432.9 377.4 430.8 376.2 427.7 C375.0 424.6 376.7 420.2 374.8 416.4 C372.9 412.6 368.0 408.9 364.9 405.1 C361.8 401.4 356.4 397.6 356.4 393.9 C356.4 390.1 360.2 383.8 364.9 382.6Z" fill="#ff8a0a" filter="url(#fy)"/>
<path d="M328.2 441.8 C330.3 439.2 334.8 438.8 339.5 437.6 C344.2 436.4 351.7 434.6 356.4 434.8 C361.1 435.0 363.5 436.9 367.7 439.0 C371.9 441.1 377.1 444.1 381.8 447.4 C386.5 450.7 392.1 454.5 395.9 458.7 C399.7 462.9 402.8 468.1 404.4 472.8 C406.0 477.5 406.3 483.6 405.8 486.9 C405.3 490.2 401.8 489.3 401.6 492.6 C401.4 495.9 403.2 502.0 404.4 506.7 C405.6 511.4 408.6 517.0 408.6 520.8 C408.6 524.5 407.0 527.6 404.4 529.2 C401.8 530.9 397.3 531.6 393.1 530.7 C388.9 529.8 383.7 526.7 379.0 523.6 C374.3 520.5 369.1 517.0 364.9 512.3 C360.7 507.6 357.4 500.6 353.6 495.4 C349.8 490.2 346.1 486.0 342.3 481.3 C338.5 476.6 333.6 471.9 331.0 467.2 C328.4 462.5 327.3 457.3 326.8 453.1 C326.3 448.9 326.1 444.4 328.2 441.8Z" fill="#ff8a0a" filter="url(#fy)"/>
<path d="M309 232 Q296 200 280 182" stroke="#ff8a0a" stroke-width="2" fill="none" opacity=".55" stroke-linecap="round"/>
<path d="M300 258 Q282 225 262 200" stroke="#ff8a0a" stroke-width="2" fill="none" opacity=".55" stroke-linecap="round"/>
<path d="M284.4 440 Q286 480 283 530" stroke="#ff8a0a" stroke-width="2" fill="none" opacity=".55" stroke-linecap="round"/>
<path d="M342 441 Q370 478 398 522" stroke="#ff8a0a" stroke-width="2" fill="none" opacity=".55" stroke-linecap="round"/>
<path d="M379 422 Q410 418 445 420" stroke="#ff8a0a" stroke-width="2" fill="none" opacity=".55" stroke-linecap="round"/>
<path d="M244 446 Q232 475 222 510" stroke="#ff8a0a" stroke-width="2" fill="none" opacity=".55" stroke-linecap="round"/>
<path d="M402 304 Q412 270 430 240" stroke="#ff8a0a" stroke-width="2" fill="none" opacity=".55" stroke-linecap="round"/>
<path d="M232 272 Q210 255 190 240" stroke="#ff8a0a" stroke-width="2" fill="none" opacity=".55" stroke-linecap="round"/>
<path d="M221 331 Q180 335 130 332" stroke="#ff8a0a" stroke-width="2" fill="none" opacity=".55" stroke-linecap="round"/>
<path d="M241 376 Q222 400 205 420" stroke="#ff8a0a" stroke-width="2" fill="none" opacity=".55" stroke-linecap="round"/>
<g clip-path="url(#cp)" filter="url(#gb)">
<ellipse cx="300" cy="178" rx="14" ry="18" fill="#86e428" opacity="0.8"/>
<ellipse cx="236" cy="248" rx="10" ry="10" fill="#86e428" opacity="0.35"/>
<ellipse cx="222" cy="470" rx="12" ry="18" fill="#86e428" opacity="0.9"/>
<ellipse cx="284" cy="495" rx="16" ry="28" fill="#86e428" opacity="0.95"/>
<ellipse cx="300" cy="515" rx="12" ry="14" fill="#86e428" opacity="0.8"/>
<ellipse cx="405" cy="408" rx="16" ry="10" fill="#86e428" opacity="0.8"/>
<ellipse cx="360" cy="462" rx="10" ry="14" fill="#86e428" opacity="0.8"/>
<ellipse cx="380" cy="485" rx="10" ry="12" fill="#86e428" opacity="0.7"/>
<ellipse cx="450" cy="305" rx="10" ry="8" fill="#86e428" opacity="0.5"/>
<ellipse cx="205" cy="250" rx="8" ry="8" fill="#86e428" opacity="0.4"/>
</g>
</g>
<path d="M40.5 305 C48 307 53 314 52 321 C51 330 43 334 36 333 C29 331 24 325 21 318" stroke="#ff3a10" stroke-width="5" fill="none"/>
<path d="M631 303.5 L587 302.5 L616.5 326.5 M618.5 295 L617 328" stroke="#ff4a10" stroke-width="5.5" fill="none" stroke-linejoin="round"/>
<circle cx="339.8" cy="312.5" r="19.5" stroke="#fff" stroke-width="1" fill="none"/>
</svg>
<div class="a" style="left:359px;top:330px;width:40px;height:13px;background:#e41c1c"></div>
<div class="t" style="left:361.00px;top:331.59px;font-size:11px;color:#ffe8e8;letter-spacing:-0.083px;">1-0.125</div>
<div class="tabd" style="left:664px;top:80px;width:49px;height:20px;"></div>
<div class="t" style="left:670.50px;top:84.69px;font-size:11px;">Capture</div>
<div class="tab" style="left:719px;top:79px;width:60px;height:22px;border-right:1px solid #aaa;border-bottom:1px solid #aaa;background:#e6e8e6"></div>
<div class="t" style="left:728.50px;top:83.19px;font-size:11px;">Analysis</div>
<div class="t" style="left:674.70px;top:114.99px;font-size:11px;letter-spacing:-0.511px;">Brightness</div>
<div class="a" style="left:673px;top:127px;width:116px;height:21px;background:linear-gradient(180deg,#e0e0e0 0,#f4f4f4 30%,#f4f4f4 70%,#e4e4e4 100%);border-top:1px solid #c8c8c8"></div>
<svg class="a" style="left:678px;top:133px" width="8" height="9"><path d="M6 0.5 L2 4.5 L6 8.5Z" fill="#444"/></svg>
<svg class="a" style="left:775px;top:133px" width="8" height="9"><path d="M2 0.5 L6 4.5 L2 8.5Z" fill="#444"/></svg>
<div class="a" style="left:717px;top:129px;width:15px;height:17px;background:linear-gradient(180deg,#f4f4f4 0,#e8e8e8 50%,#d2d2d2 51%,#dcdcdc 100%);border:1px solid #8c8c8c;border-radius:2px"></div>
<div class="t" style="left:676.70px;top:164.84px;font-size:12px;font-weight:bold;letter-spacing:-0.325px;">Max.:</div>
<div class="edit" style="left:720px;top:161px;width:64px;height:22px;"></div>
<div class="t" style="left:723.70px;top:164.80px;font-size:13px;font-weight:bold;letter-spacing:0.250px;">0.498</div>
<div class="t" style="left:676.70px;top:198.84px;font-size:12px;font-weight:bold;letter-spacing:-0.325px;">Mean:</div>
<div class="edit" style="left:720px;top:195px;width:64px;height:22px;"></div>
<div class="t" style="left:723.70px;top:198.80px;font-size:13px;font-weight:bold;letter-spacing:0.250px;">0.066</div>
<div class="t" style="left:676.70px;top:238.14px;font-size:12px;font-weight:bold;letter-spacing:-0.783px;">Cursor:</div>
<div class="edit" style="left:720px;top:232px;width:64px;height:22px;"></div>
<div class="t" style="left:723.70px;top:235.70px;font-size:13px;font-weight:bold;letter-spacing:0.250px;">0.000</div>
<div class="grp" style="left:672px;top:266px;width:118px;height:110px;"></div>
<div class="a" style="left:677px;top:258px;width:75px;height:14px;background:#c0dcc0"></div>
<div class="t" style="left:678.80px;top:258.54px;font-size:12px;font-weight:bold;letter-spacing:-0.636px;clip-path:inset(0 0 2px 0);">Digital Zoom</div>
<div class="grp" style="left:679px;top:272px;width:103px;height:63px;"></div>
<div class="radio on" style="left:686px;top:290px"></div>
<div class="t" style="left:701.70px;top:289.84px;font-size:12px;font-weight:bold;letter-spacing:-0.143px;">Zoom out</div>
<div class="radio" style="left:686px;top:313px"></div>
<div class="t" style="left:701.70px;top:312.84px;font-size:12px;font-weight:bold;letter-spacing:-0.333px;">Zoom in</div>
<div class="a" style="left:691px;top:341px;width:1px;height:2px;background:#000"></div>
<div class="a" style="left:699px;top:341px;width:1px;height:2px;background:#000"></div>
<div class="a" style="left:702px;top:341px;width:1px;height:2px;background:#000"></div>
<div class="btn" style="left:679px;top:343px;width:47px;height:23px;"></div>
<div class="t" style="left:684.00px;top:349.34px;font-size:12px;font-weight:bold;letter-spacing:-0.100px;">Define</div>
<div class="btn" style="left:736px;top:343px;width:46px;height:23px;"></div>
<div class="t" style="left:741.50px;top:349.34px;font-size:12px;font-weight:bold;letter-spacing:0.250px;">Reset</div>
<div class="grp" style="left:672px;top:386px;width:118px;height:46px;"></div>
<div class="a" style="left:677px;top:378px;width:37px;height:12px;background:#c0dcc0"></div>
<div class="t" style="left:678.70px;top:378.14px;font-size:12px;font-weight:bold;letter-spacing:-0.200px;">Select</div>
<div class="radio on" style="left:678px;top:395px"></div>
<div class="t" style="left:695.00px;top:394.54px;font-size:12px;font-weight:bold;letter-spacing:-0.273px;">Fluorescence</div>
<div class="radio" style="left:678px;top:413px"></div>
<div class="t" style="left:695.00px;top:412.84px;font-size:12px;font-weight:bold;letter-spacing:-0.222px;">Live Video</div>
<div class="grp" style="left:672px;top:442px;width:118px;height:86px;"></div>
<div class="a" style="left:677px;top:434px;width:23px;height:12px;background:#c0dcc0"></div>
<div class="t" style="left:678.00px;top:434.54px;font-size:12px;font-weight:bold;letter-spacing:-0.500px;">AOI</div>
<div class="btn" style="left:677px;top:450px;width:43px;height:14px;"></div>
<div class="t" style="left:683.00px;top:451.34px;font-size:12px;font-weight:bold;">Reset</div>
<div class="btn" style="left:741px;top:450px;width:44px;height:14px;"></div>
<div class="t" style="left:749.00px;top:451.34px;font-size:12px;font-weight:bold;clip-path:inset(0 0 3px 0);">Type</div>
<div class="btn" style="left:741px;top:470px;width:44px;height:13px;"></div>
<div class="t" style="left:751.00px;top:470.84px;font-size:12px;font-weight:bold;letter-spacing:0.500px;">Add</div>
<div class="btn" style="left:741px;top:488px;width:44px;height:13px;"></div>
<div class="t" style="left:745.00px;top:488.34px;font-size:12px;font-weight:bold;">Delete</div>
<div class="btn" style="left:741px;top:506px;width:44px;height:13px;"></div>
<div class="t" style="left:752.50px;top:506.34px;font-size:12px;font-weight:bold;letter-spacing:-0.333px;">Edit</div>
<div class="chk" style="left:676px;top:481px;width:13px;height:12px;"><svg width="11" height="10" viewBox="0 0 11 11" style="position:absolute;left:0;top:0"><path d="M2 5.5 L4.5 9 L9 1.5" stroke="#3d4f9a" stroke-width="2" fill="none"/></svg></div>
<div class="t" style="left:692.50px;top:480.14px;font-size:12px;font-weight:bold;letter-spacing:-1.000px;">Show</div>
<div class="chk" style="left:676px;top:505px;width:13px;height:12px;"></div>
<div class="t" style="left:692.50px;top:504.04px;font-size:12px;font-weight:bold;color:#7a8a7a;letter-spacing:-0.200px;">Filled</div>
<div class="btn" style="left:679px;top:532px;width:92px;height:23px;"></div>
<div class="t" style="left:686.70px;top:537.34px;font-size:12px;font-weight:bold;letter-spacing:-0.227px;">Measure Abs.</div>
<div class="grp" style="left:25px;top:585px;width:766px;height:37px;border-bottom:none"></div>
<div class="a" style="left:30px;top:577px;width:122px;height:13px;background:#c0dcc0"></div>
<div class="t" style="left:32.50px;top:578.34px;font-size:12px;font-weight:bold;">Select type of Image</div>
<div class="radio" style="left:32px;top:593px"></div>
<div class="t" style="left:48.75px;top:592.34px;font-size:12px;font-weight:bold;">Ft</div>
<div class="radio" style="left:32px;top:608px"></div>
<div class="t" style="left:48.75px;top:607.34px;font-size:12px;font-weight:bold;">Fo</div>
<div class="radio on" style="left:116px;top:593px"></div>
<div class="t" style="left:132.50px;top:592.34px;font-size:12px;font-weight:bold;">F</div>
<div class="radio" style="left:116px;top:608px"></div>
<div class="t" style="left:132.50px;top:607.34px;font-size:12px;font-weight:bold;">Fm</div>
<div class="radio" style="left:200px;top:593px"></div>
<div class="t" style="left:216.25px;top:592.34px;font-size:12px;font-weight:bold;">Fm'</div>
<div class="radio" style="left:200px;top:608px"></div>
<div class="t" style="left:216.25px;top:607.34px;font-size:12px;font-weight:bold;">Fv/Fm</div>
<div class="radio" style="left:284px;top:593px"></div>
<div class="t" style="left:300.75px;top:592.34px;font-size:12px;font-weight:bold;">Y(II)</div>
<div class="radio" style="left:284px;top:608px"></div>
<div class="t" style="left:300.75px;top:607.34px;font-size:12px;font-weight:bold;">Y(NPQ)</div>
<div class="radio" style="left:368px;top:593px"></div>
<div class="t" style="left:384.75px;top:592.34px;font-size:12px;font-weight:bold;">Y(NO)</div>
<div class="radio" style="left:368px;top:608px"></div>
<div class="t" style="left:384.75px;top:607.34px;font-size:12px;font-weight:bold;">Abs.</div>
<div class="radio" style="left:452px;top:593px"></div>
<div class="t" style="left:468.75px;top:592.34px;font-size:12px;font-weight:bold;">PS/50</div>
<div class="radio" style="left:452px;top:608px"></div>
<div class="t" style="left:468.75px;top:607.34px;font-size:12px;font-weight:bold;">NIR</div>
<div class="radio" style="left:535px;top:593px"></div>
<div class="t" style="left:552.15px;top:592.34px;font-size:12px;font-weight:bold;">NPQ/4</div>
<div class="radio" style="left:535px;top:608px"></div>
<div class="t" style="left:552.15px;top:607.34px;font-size:12px;font-weight:bold;">Red</div>
<div class="radio" style="left:619px;top:593px"></div>
<div class="t" style="left:636.15px;top:592.34px;font-size:12px;font-weight:bold;">qN</div>
<div class="radio" style="left:619px;top:608px"></div>
<div class="t" style="left:636.15px;top:607.34px;font-size:12px;font-weight:bold;">qP</div>
<div class="radio" style="left:704px;top:593px"></div>
<div class="t" style="left:720.55px;top:592.34px;font-size:12px;font-weight:bold;">qL</div>
<div class="radio" style="left:704px;top:608px"></div>
<div class="t" style="left:720.55px;top:607.34px;font-size:12px;font-weight:bold;">Inh.</div>
<div class="grp" style="left:14px;top:629px;width:282px;height:69px;border-bottom:none"></div>
<div class="edit" style="left:23px;top:638px;width:133px;height:19px;"></div>
<div class="t" style="left:28.80px;top:640.54px;font-size:12px;letter-spacing:-0.450px;">1 - 11.04.16 11:15:43</div>
<div class="a" style="left:22px;top:672px;width:134px;height:15px;background:#e4e4e4;border-top:1px solid #bbb;border-bottom:1px solid #fff"></div>
<div class="a" style="left:22px;top:673px;width:7px;height:13px;background:linear-gradient(180deg,#f8f8f8,#d8d8d8);border:1px solid #8a8a8a;border-radius:3px 3px 2px 2px"></div>
<div class="a" style="left:25px;top:664px;width:1px;height:6px;background:#9aa"></div>
<div class="a" style="left:153px;top:664px;width:1px;height:6px;background:#9aa"></div>
<div class="btn" style="left:167px;top:640px;width:23px;height:23px;"></div>
<div class="btn" style="left:198px;top:640px;width:23px;height:23px;"></div>
<div class="btn" style="left:231px;top:640px;width:23px;height:23px;"></div>
<div class="btn" style="left:263px;top:640px;width:23px;height:23px;"></div>
<div class="edit" style="left:174px;top:669px;width:54px;height:23px;"></div>
<div class="t" style="left:178.00px;top:672.60px;font-size:13px;font-weight:bold;">1</div>
<div class="chk" style="left:246px;top:675px;width:13px;height:13px;"></div>
<div class="t" style="left:263.60px;top:674.50px;font-size:13px;font-weight:bold;letter-spacing:-1.000px;">Go</div>
<div class="grp" style="left:298px;top:629px;width:318px;height:69px;border-bottom:none"></div>
<div class="btn" style="left:303px;top:633px;width:77px;height:19px;border-color:#9a9a9a;background:#f0f0f0"></div>
<div class="t" style="left:307.00px;top:636.14px;font-size:12px;font-weight:bold;color:#7a7a7a;">New Record</div>
<div class="btn" style="left:303px;top:658px;width:77px;height:37px;border-color:#aaa;background:#f0f0f0"></div>
<div class="t" style="left:322.90px;top:670.84px;font-size:12px;font-weight:bold;color:#7a7a7a;letter-spacing:-0.280px;">Fo, Fm</div>
<div class="a" style="left:385px;top:626px;width:102px;height:1px;background:#fff"></div>
<div class="t" style="left:388.70px;top:643.80px;font-size:13px;">PAR:</div>
<div class="edit" style="left:428px;top:640px;width:49px;height:22px;"></div>
<div class="t" style="left:431.70px;top:643.60px;font-size:13px;font-weight:bold;">1</div>
<div class="chk" style="left:388px;top:672px;width:13px;height:12px;"></div>
<div class="t" style="left:405.60px;top:670.00px;font-size:13px;font-weight:bold;letter-spacing:0.333px;">Measure</div>
<div class="chk" style="left:484px;top:638px;width:12px;height:12px;"><svg width="10" height="10" viewBox="0 0 11 11" style="position:absolute;left:0;top:0"><path d="M2 5.5 L4.5 9 L9 1.5" stroke="#9aa" stroke-width="2" fill="none"/></svg></div>
<div class="t" style="left:499.70px;top:637.54px;font-size:12px;font-weight:bold;color:#8a8a8a;letter-spacing:-1.000px;">ML</div>
<div class="chk" style="left:484px;top:658px;width:12px;height:13px;"></div>
<div class="t" style="left:499.70px;top:657.94px;font-size:12px;font-weight:bold;color:#8a8a8a;letter-spacing:-1.000px;">AL</div>
<div class="chk" style="left:484px;top:678px;width:12px;height:12px;"></div>
<div class="t" style="left:499.70px;top:677.54px;font-size:12px;font-weight:bold;color:#8a8a8a;letter-spacing:-1.000px;">Ext</div>
<div class="btn" style="left:532px;top:631px;width:77px;height:25px;border-color:#aaa;background:#f0f0f0"></div>
<div class="t" style="left:540.00px;top:637.54px;font-size:12px;font-weight:bold;color:#7a7a7a;letter-spacing:-0.125px;">SAT-Pulse</div>
<div class="btn" style="left:532px;top:667px;width:77px;height:25px;border-color:#aaa;background:#f0f0f0"></div>
<div class="t" style="left:548.00px;top:673.70px;font-size:13px;color:#7a7a7a;letter-spacing:0.200px;">AL + Y</div>
<div class="grp" style="left:620px;top:633px;width:106px;height:64px;"></div>
<div class="a" style="left:625px;top:625px;width:35px;height:12px;background:#c0dcc0"></div>
<div class="t" style="left:626.80px;top:626.14px;font-size:12px;font-weight:bold;letter-spacing:-0.500px;">Clock</div>
<div class="a" style="left:622px;top:639px;width:100px;height:22px;background:#f0f0f0;border:1px solid #c8c8c8;border-radius:3px"></div>
<div class="t" style="left:626.80px;top:643.90px;font-size:13px;font-weight:bold;color:#8a8a8a;letter-spacing:-0.375px;">SAT-Pulse</div>
<svg class="a" style="left:709px;top:648px" width="9" height="6"><path d="M0 0 L8 0 L4 4Z" fill="#999"/></svg>
<div class="chk" style="left:622px;top:669px;width:13px;height:13px;"></div>
<div class="t" style="left:640.00px;top:669.80px;font-size:13px;font-weight:bold;color:#7a8a7a;letter-spacing:-1.000px;">On</div>
<div class="edit" style="left:663px;top:666px;width:53px;height:25px;"></div>
<div class="t" style="left:665.50px;top:670.50px;font-size:13px;color:#444;">20</div>
<div class="t" style="left:717.50px;top:669.80px;font-size:13px;font-weight:bold;">s</div>
<svg class="a" style="left:699px;top:669px" width="15" height="20"><rect x="1" y="0.5" width="12.5" height="8.5" rx="3" fill="#e8e8e8" stroke="#000" stroke-width="1"/><rect x="1" y="9.8" width="12.5" height="8.8" rx="3" fill="#e8e8e8" stroke="#000" stroke-width="1"/><path d="M3.5 7 L7.25 2.5 L11 7Z" fill="#000"/><path d="M3.5 11.5 L7.25 16 L11 11.5Z" fill="#000"/></svg>
<svg class="a" style="left:0;top:0" width="30" height="30"><path d="M9.5 13 C10 11.5 13 11.2 16 11.6 C19 12 21 13 21 15.5 C21.2 18.5 20.5 21 18.5 22.5 C16 23.5 13 23 11.5 21.5 C10 19.5 9.3 16 9.5 13Z" fill="#13a81a" stroke="#000" stroke-width="1.2"/><path d="M14.5 16 L17 18" stroke="#0a7a10" stroke-width="1"/><ellipse cx="18" cy="10" rx="5.2" ry="2.8" fill="#eee8ff" stroke="#000" stroke-width="1.1"/><ellipse cx="18.3" cy="10.2" rx="2" ry="1.7" fill="#3a3aa0"/><circle cx="8.5" cy="11.3" r=".8" fill="#000"/><path d="M20 21.5 L22.5 22.5" stroke="#000" stroke-width="1"/></svg>
<div class="a" style="left:692px;top:0px;width:102px;height:20px;border:1px solid #3a5658;border-top:none;border-radius:0 0 5px 5px;overflow:hidden;box-shadow:0 1px 0 rgba(255,255,255,.5)"><div class="a" style="left:0;top:0;width:27px;height:19px;background:linear-gradient(180deg,#b4d2d4 0,#98c0c2 45%,#5f9296 50%,#6fa2a4 100%);border-right:1px solid #4a6a6c"></div><div class="a" style="left:27px;top:0;width:27px;height:19px;background:linear-gradient(180deg,#b4d2d4 0,#98c0c2 45%,#5f9296 50%,#6fa2a4 100%);border-right:1px solid #4a6a6c"></div><div class="a" style="left:54px;top:0;width:47px;height:19px;background:linear-gradient(180deg,#e8a89a 0,#d88878 40%,#c8402a 55%,#d86040 100%)"></div></div>
<div class="a" style="left:702px;top:11px;width:9px;height:4px;background:#fff;border:1px solid #445;border-radius:1px"></div>
<div class="a" style="left:728px;top:5px;width:11px;height:9px;border:2px solid #fff;box-shadow:0 0 0 1px #445, inset 0 0 0 1px #445"></div>
<svg class="a" style="left:761px;top:3px" width="18" height="14"><path d="M3.5 2.5 L14.5 11.5 M14.5 2.5 L3.5 11.5" stroke="#333" stroke-width="4.4"/><path d="M3.5 2.5 L14.5 11.5 M14.5 2.5 L3.5 11.5" stroke="#fff" stroke-width="2.6"/></svg>
<svg class="a" style="left:167px;top:640px" width="23" height="23"><rect x="4" y="4" width="14.5" height="14.5" rx="1" fill="#000"/><rect x="6.5" y="4.8" width="9" height="6.8" fill="#fff"/><rect x="6.5" y="4.8" width="9" height="1" fill="#e03030"/><rect x="8.6" y="13.6" width="6.6" height="4.8" fill="#c8c8c8"/><rect x="11" y="15" width="2" height="2" fill="#000"/></svg>
<svg class="a" style="left:198px;top:640px" width="23" height="23"><path d="M5.5 7 L10 7 L11 8.5 L15.5 8.5 L15.5 11 L8 11 L5.5 16 Z" fill="#f0f080" stroke="#000" stroke-width="1"/><path d="M8 11 L19 11 L16.5 16 L5.5 16 Z" fill="#e8e850" stroke="#000" stroke-width="1"/></svg>
<svg class="a" style="left:231px;top:640px" width="23" height="23" shape-rendering="crispEdges"><path d="M7.5 5.5 L13.5 5.5 L16.5 8.5 L16.5 18.5 L7.5 18.5 Z" fill="#fff" stroke="#000" stroke-width="1.3" shape-rendering="auto"/><path d="M9 8.5 H12 M9 10.5 H15 M9 12.5 H15 M9 14.5 H15 M9 16.5 H14" stroke="#000" stroke-width="1"/></svg>
<svg class="a" style="left:263px;top:640px" width="23" height="23"><path d="M4.5 5.5 L10.5 5.5 L13.5 8.5 L13.5 17.5 L4.5 17.5 Z" fill="#fff" stroke="#000" stroke-width="1.3"/><path d="M6 8.5 H9 M6 10.5 H9 M6 12.5 H9 M6 14.5 H9" stroke="#000" stroke-width="1" shape-rendering="crispEdges"/><path d="M10 12 L15 12 L15 9 L20.5 14.5 L15 20 L15 17 L10 17 Z" fill="#f00808"/></svg>
<div class="a" style="left:728px;top:501px;width:10px;height:19px;background:#f4f4f4;border:1px solid #6a7a6a;border-radius:3px"><svg width="8" height="17" viewBox="0 0 8 17" preserveAspectRatio="none" style="position:absolute;left:0;top:0"><circle cx="5" cy="3" r="1.6" fill="none" stroke="#000" stroke-width="1"/><path d="M4 4.5 L1.8 7 L5.5 9.5 L1.8 12 L5.8 14 L3 16" fill="none" stroke="#000" stroke-width="1.1"/></svg></div>
<div class="a" style="left:777px;top:533px;width:10px;height:23px;background:#f4f4f4;border:1px solid #6a7a6a;border-radius:3px"><svg width="8" height="21" viewBox="0 0 8 17" preserveAspectRatio="none" style="position:absolute;left:0;top:0"><circle cx="5" cy="3" r="1.6" fill="none" stroke="#000" stroke-width="1"/><path d="M4 4.5 L1.8 7 L5.5 9.5 L1.8 12 L5.8 14 L3 16" fill="none" stroke="#000" stroke-width="1.1"/></svg></div>
<div class="a" style="left:789px;top:128px;width:9px;height:20px;background:#f4f4f4;border:1px solid #6a7a6a;border-radius:3px"><svg width="7" height="18" viewBox="0 0 8 17" preserveAspectRatio="none" style="position:absolute;left:0;top:0"><circle cx="5" cy="3" r="1.6" fill="none" stroke="#000" stroke-width="1"/><path d="M4 4.5 L1.8 7 L5.5 9.5 L1.8 12 L5.8 14 L3 16" fill="none" stroke="#000" stroke-width="1.1"/></svg></div>
<div class="grp" style="left:730px;top:634px;width:61px;height:63px;"></div>
<div class="a" style="left:735px;top:626px;width:38px;height:12px;background:#c0dcc0"></div>
<div class="t" style="left:736.80px;top:626.14px;font-size:12px;font-weight:bold;letter-spacing:-0.400px;">Script</div>
<div class="btn" style="left:736px;top:646px;width:47px;height:16px;"></div>
<div class="t" style="left:746.00px;top:648.34px;font-size:12px;font-weight:bold;letter-spacing:-0.333px;">Load</div>
<div class="btn" style="left:736px;top:672px;width:47px;height:16px;border-color:#aaa;background:#f0f0f0"></div>
<div class="t" style="left:749.00px;top:674.34px;font-size:12px;font-weight:bold;color:#7a7a7a;letter-spacing:-1.000px;">Run</div></body></html>
